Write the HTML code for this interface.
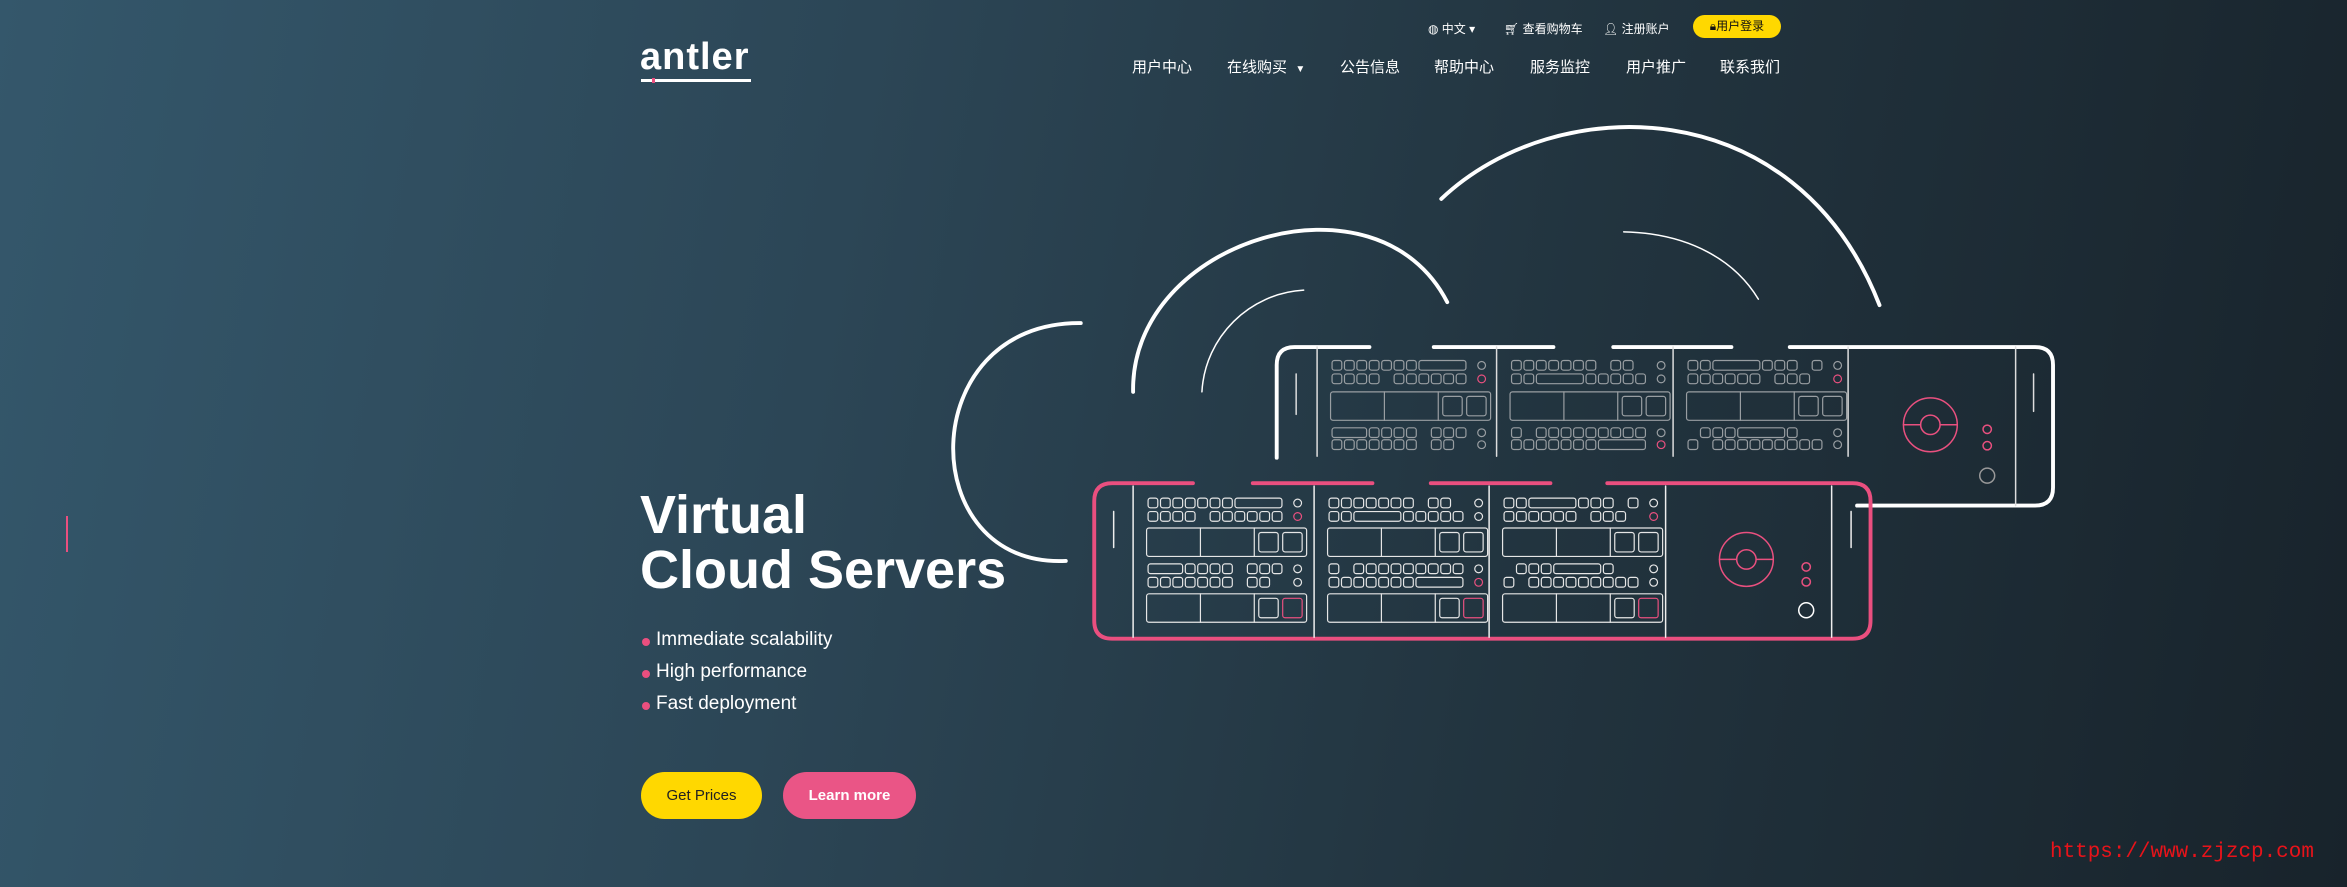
<!DOCTYPE html>
<html><head><meta charset="utf-8">
<style>
*{margin:0;padding:0;box-sizing:border-box}
html,body{width:2347px;height:887px;overflow:hidden}
body{position:relative;font-family:"Liberation Sans","Noto Sans CJK SC",sans-serif;color:#fff;
background:linear-gradient(100deg,#34576b 0%,#2c4656 35%,#22343f 65%,#18232b 100%);}
.abs{position:absolute;white-space:nowrap}
.top{font-size:12px;top:20px;color:#fff}
.nav{font-size:15px;top:56px}
.login{left:1693px;top:15px;width:88px;height:23px;background:#ffd800;border-radius:12px;color:#111;font-size:12px;line-height:23px;text-align:center}
.logo{left:640px;top:36px;font-size:38px;font-weight:bold;letter-spacing:1px}
h1{position:absolute;left:640px;top:488px;font-size:54px;line-height:55px;font-weight:bold}
.li{font-size:19px;left:656px}
.dot{position:absolute;left:-14px;top:9px;width:8px;height:8px;border-radius:50%;background:#ea4f7f}
.btn{position:absolute;top:772px;height:47px;border-radius:24px;font-size:15px;font-weight:bold;line-height:47px;text-align:center}
</style></head><body>
<svg class="abs" style="left:0;top:0" width="2347" height="887" viewBox="0 0 1568 593" id="art" fill="none" stroke-linecap="round">
<g stroke="#fff" stroke-width="2.6">
<path d="M963 133 C1040 60 1200 60 1256 204"/>
<path d="M757 262 C755 160 920 110 967 202"/>
<path d="M722 216 C610 215 610 380 712 375"/>
</g>
<g stroke="#fff" stroke-width="1">
<path d="M1085 155 C1130 156 1160 175 1175 200"/>
<path d="M803 262 C805 225 835 196 871 194"/>
</g>
<g stroke="#fff" stroke-width="2.6">
<path d="M853 306 V244 Q853 232 865 232 H915"/>
<path d="M958 232 H1038 M1078 232 H1157"/>
<path d="M1196 232 H1360 Q1372 232 1372 244 V326 Q1372 338 1360 338 H1241"/>
</g>
<g stroke="#ddd" stroke-width="1">
<path d="M880 232 V305 M1000 232 V305 M1118 232 V305 M1235 232 V305 M1347 232 V338 M866 250 V277 M1359 250 V275"/>
</g>
<g stroke="#e9507f" stroke-width="1">
<circle cx="1290" cy="284" r="18"/><circle cx="1290" cy="284" r="6.5"/>
<path d="M1272 284 H1283.5 M1296.5 284 H1308"/>
<circle cx="1328" cy="287" r="2.8"/><circle cx="1328" cy="298" r="2.8"/>
</g>
<circle cx="1328" cy="318" r="5" stroke="#999" stroke-width="1"/>
<g stroke="#ea4f7f" stroke-width="2.6">
<path d="M797 323 H743 Q731 323 731 335 V415 Q731 427 743 427 H1238 Q1250 427 1250 415 V335 Q1250 323 1238 323 H1074"/>
<path d="M837 323 H917 M956 323 H1036"/>
</g>
<g stroke="#eee" stroke-width="1">
<path d="M757 325 V426 M878 325 V426 M995 325 V426 M1113 325 V426 M1224 325 V426 M744 342 V366 M1237 342 V366"/>
</g>
<g stroke="#e9507f" stroke-width="1">
<circle cx="1167" cy="374" r="18"/><circle cx="1167" cy="374" r="6.5"/>
<path d="M1149 374 H1160.5 M1173.5 374 H1185"/>
<circle cx="1207" cy="379" r="2.8"/><circle cx="1207" cy="389" r="2.8"/>
</g>
<circle cx="1207" cy="408" r="5" stroke="#fff" stroke-width="1"/>
<g id="bays"></g>
<text x="1370" y="573" fill="#e8131a" font-family="Liberation Mono,monospace" font-size="14">https://www.zjzcp.com</text>
</svg>
<script>
(function(){
var g=document.getElementById('bays'),s='';
function R(x,y,w,h,c){s+='<rect x="'+x+'" y="'+y+'" width="'+w+'" height="'+h+'" rx="1.6" stroke="'+c+'" stroke-width="0.8"/>';}
function C(x,y,c){s+='<circle cx="'+x+'" cy="'+y+'" r="2.6" stroke="'+c+'" stroke-width="0.8"/>';}
var pats=[[1,1,1,1,1,1,1,4],[1,1,1,1,0,1,1,1,1,1,1],[3,1,1,1,1,0,1,1,1],[1,1,1,1,1,1,1,0,1,1]];
var pats2=[[1,1,1,1,1,1,1,0,1,1],[1,1,4,1,1,1,1,1],[1,0,1,1,1,1,1,1,1,1,1],[1,1,1,1,1,1,1,4]];
var pats3=[[1,1,4,1,1,1,0,1],[1,1,1,1,1,1,0,1,1,1],[0,1,1,1,4,1],[1,0,1,1,1,1,1,1,1,1,1]];
var P=[pats,pats2,pats3];
function row(x,y,p,c){var cx=x+10,i;for(i=0;i<p.length;i++){var t=p[i];if(t==1){R(cx,y,6.5,6.5,c);cx+=8.3;}else if(t==0){cx+=8.3;}else{R(cx,y,t*8.3-1.8,6.5,c);cx+=t*8.3;}}}
function block(x,y,c,pink){R(x+9,y,107,19,c);s+='<path d="M'+(x+45)+' '+y+'V'+(y+19)+'M'+(x+81)+' '+y+'V'+(y+19)+'" stroke="'+c+'" stroke-width="0.8"/>';R(x+84,y+3,13,13,c);R(x+100,y+3,13,13,pink||c);}
function bay(x,ys,c,bi,front){var p=P[bi];var pk='#e9507f';
row(x,ys[0],p[0],c);C(x+110,ys[0]+3.3,c);
row(x,ys[1],p[1],c);C(x+110,ys[1]+3.3,bi==1?c:pk);
block(x,ys[2],c);
row(x,ys[3],p[2],c);C(x+110,ys[3]+3.3,c);
row(x,ys[4],p[3],c);C(x+110,ys[4]+3.3,bi==1?pk:c);
if(front)block(x,ys[5],c,pk);}
var bx=[880,1000,1118];
for(var i=0;i<3;i++)bay(bx[i],[241,250,262,286,294],'#999ea2',i,false);
var fx=[757,878,995];
for(i=0;i<3;i++)bay(fx[i],[333,342,353,377,386,397],'#e6e6e6',i,true);
g.innerHTML=s;})();
</script>
<div class="abs" style="left:66px;top:516px;width:2px;height:36px;background:#ea4f7f"></div>

<div class="abs logo">antler</div>
<div class="abs" style="left:641px;top:79px;width:110px;height:3px;background:#fff"></div>
<div class="abs" style="left:652px;top:78px;width:3px;height:5px;background:#ea4f7f"></div>

<div class="abs top" style="left:1428px">◍ 中文 ▾</div>
<div class="abs top" style="left:1504px">🛒︎ 查看购物车</div>
<div class="abs top" style="left:1603px">👤︎ 注册账户</div>
<div class="abs login">🔒︎用户登录</div>

<div class="abs nav" style="left:1132px">用户中心</div>
<div class="abs nav" style="left:1227px">在线购买 &nbsp;<span style="font-size:10px">▼</span></div>
<div class="abs nav" style="left:1340px">公告信息</div>
<div class="abs nav" style="left:1434px">帮助中心</div>
<div class="abs nav" style="left:1530px">服务监控</div>
<div class="abs nav" style="left:1626px">用户推广</div>
<div class="abs nav" style="left:1720px">联系我们</div>

<h1>Virtual<br>Cloud Servers</h1>
<div class="abs li" style="top:629px"><span class="dot"></span>Immediate scalability</div>
<div class="abs li" style="top:661px"><span class="dot"></span>High performance</div>
<div class="abs li" style="top:693px"><span class="dot"></span>Fast deployment</div>

<div class="btn" style="left:641px;width:121px;background:#ffd800;color:#222;font-weight:normal">Get Prices</div>
<div class="btn" style="left:783px;width:133px;background:#ea5586;color:#fff">Learn more</div>
</body></html>
